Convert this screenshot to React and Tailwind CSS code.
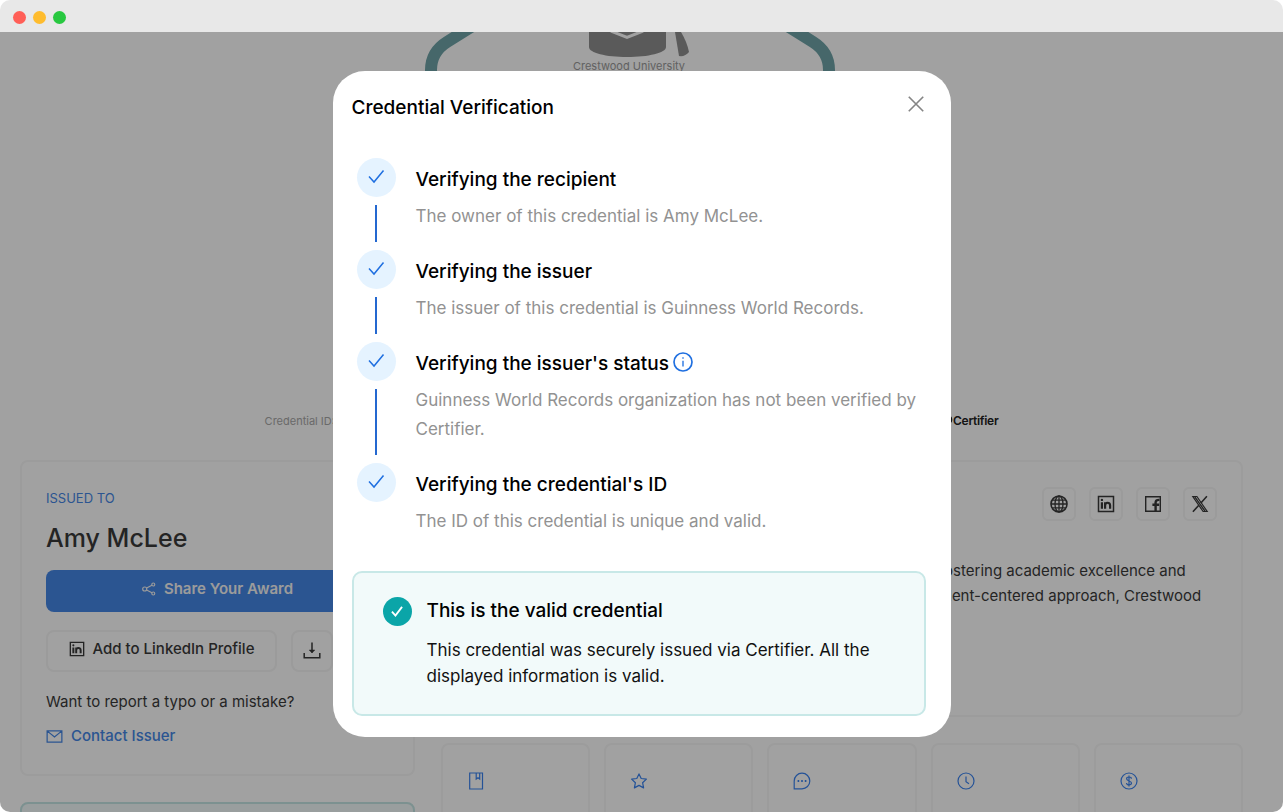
const steps = [
  { title: 'Verifying the recipient', text: 'The owner of this credential is Amy McLee.' },
  { title: 'Verifying the issuer', text: 'The issuer of this credential is Guinness World Records.' },
  {
    title: "Verifying the issuer's status",
    text: 'Guinness World Records organization has not been verified by Certifier.',
    info: true,
  },
  { title: "Verifying the credential's ID", text: 'The ID of this credential is unique and valid.' },
];

function Icon({ size = 18, stroke = 1.2, children, className = '' }) {
  return (
    <svg
      width={size}
      height={size}
      viewBox="0 0 18 18"
      fill="none"
      stroke="currentColor"
      strokeWidth={stroke}
      className={`shrink-0 ${className}`}
      aria-hidden="true"
    >
      {children}
    </svg>
  );
}

function ShareIcon() {
  return (
    <Icon size={14} stroke={1.5}>
      <circle cx="3.5" cy="9" r="2.6" />
      <circle cx="14.5" cy="3.2" r="1.9" />
      <circle cx="14.5" cy="14.8" r="1.9" />
      <path d="M5.9 7.8 12.8 4.1M5.9 10.2l6.9 3.7" />
    </Icon>
  );
}

function LinkedInIcon({ size = 16 }) {
  return (
    <Icon size={size} stroke={1.5}>
      <path d="M1.5 1.5h15v15h-15z" />
      <path d="M4.9 7.2v6.6M8.1 7.2v6.6M8.1 10.4c0-3.4 5-3.6 5 0v3.4" strokeWidth="2.2" />
      <circle cx="4.9" cy="4.9" r="1.2" fill="currentColor" stroke="none" />
    </Icon>
  );
}

function FacebookIcon() {
  return (
    <Icon size={18} stroke={1.4}>
      <path d="M1.7 1.7h14.6v14.6H1.7z" />
      <path d="M11.6 16V7.6c0-2 1-2.9 3.9-2.7M8.4 9.7h6.8" strokeWidth="2.4" />
    </Icon>
  );
}

function GlobeIcon() {
  return (
    <Icon size={18} stroke={1.3}>
      <circle cx="9" cy="9" r="8" strokeWidth="1.6" />
      <ellipse cx="9" cy="9" rx="4" ry="8" />
      <path d="M9 1v16M1 9h16M2.2 5.2h13.6M2.2 12.8h13.6" />
    </Icon>
  );
}

function XLogoIcon() {
  return (
    <Icon size={18} stroke={1.2}>
      <path d="M1.8 1.5h4.1l10.3 15h-4.1z" />
      <path d="M15.9 1.3 9.9 8M7.8 10.3l-5.9 6.4" strokeWidth="1.6" />
      <path d="M3.8 1.8 14 16.2" strokeWidth="1.4" />
    </Icon>
  );
}

function DownloadIcon() {
  return (
    <Icon size={18} stroke={1.5}>
      <path d="M9 .5v10M1.2 11v4.8h15.6V11" />
      <path d="M6.2 8h5.6L9 11z" fill="currentColor" strokeWidth="0.5" />
    </Icon>
  );
}

function MailIcon() {
  return (
    <Icon size={17} stroke={1.3}>
      <path d="M1.2 3h15.6v12H1.2zM1.8 3.6 9 9.6l7.2-6" />
    </Icon>
  );
}

const tiles = [
  <Icon key="book">
    <path d="M2.7 1h12.8v16H2.7zM9.2 1v6l1.8-1.3L12.7 7V1" />
  </Icon>,
  <Icon key="star">
    <path strokeLinejoin="round" d="m9 1.9 2.2 4.6 5.2.6-3.8 3.6 1 5.2L9 13.4l-4.6 2.5 1-5.2L1.6 7.1l5.2-.6z" />
  </Icon>,
  <Icon key="chat">
    <path d="M1.2 16.8V9A7.8 7.8 0 1 1 9 16.8z" />
    <path d="M4.6 9h1.6M8.2 9h1.6M11.8 9h1.6" strokeWidth="1.8" />
  </Icon>,
  <Icon key="clock">
    <circle cx="9" cy="9" r="8" />
    <path d="M9 4.5V9.8l3 2" />
  </Icon>,
  <Icon key="dollar">
    <circle cx="9" cy="9" r="8" />
    <path d="M11.4 6.8c0-2.4-4.8-2.4-4.8 0 0 2.6 4.9 1.7 4.9 4.3 0 2.5-5 2.5-5 0M9 3.6v10.8" />
  </Icon>,
];

function CertificatePreview() {
  return (
    <svg width="414" height="340" viewBox="0 0 414 340" className="mx-auto" aria-hidden="true">
      <path
        d="M46-5 22 10Q6 20 6 38V250Q6 270 22 280L180 335h50l158-55Q404 270 404 250V38Q404 20 388 10L364-5"
        fill="none"
        stroke="#6fa4a8"
        strokeWidth="12"
      />
      <path d="M164 0v15c0 6 17 10 38 10s39-4 39-10V0z" fill="#8f8f8f" />
      <path d="M186-1l16 6.5 16-6.5" fill="none" stroke="#fff" strokeWidth="3" />
      <path d="M250 0h6q6 10 8 20-4 5-10 4z" fill="#8f8f8f" />
      <text x="204" y="38" textAnchor="middle" fill="#9a9a9a" fontSize="11">
        Crestwood University
      </text>
    </svg>
  );
}

function CredentialPage() {
  return (
    <main className="pl-5 pr-10 text-[#3a3a3a]">
      <div className="flex h-[428px] flex-col justify-between">
        <CertificatePreview />
        <div className="mx-auto mb-[31px] flex w-[60%] items-center justify-between text-[11px] leading-4">
          <span className="text-[#a8a8a8]">Credential ID:</span>
          <span className="flex items-center text-xs font-semibold tracking-tight text-[#222]">
            <Icon size={12} stroke={2}>
              <circle cx="10" cy="7" r="6" />
              <path d="M6 12v5l4-2 4 2v-5" />
            </Icon>
            Certifier
          </span>
        </div>
      </div>

      <div className="grid grid-cols-[33fr_67fr] items-start gap-[26px]">
        <div className="space-y-[26px]">
          <section className="rounded-lg border-2 border-[#f7f7f7] px-6 pt-7 pb-[26px]">
            <p className="text-[13px] leading-4 text-[#4587e6]">ISSUED TO</p>
            <h1 className="mt-3.5 text-[25px] leading-9 font-medium">Amy McLee</h1>
            <button className="mt-3.5 flex h-[42px] w-full items-center justify-center gap-2 rounded-lg bg-[#4587e6] pb-1 text-[15px] font-semibold text-[#f5f5f5]">
              <ShareIcon />
              Share Your Award
            </button>
            <div className="mt-[18px] flex gap-3.5">
              <button className="flex h-[42px] flex-1 items-center justify-center gap-2 rounded-lg border-2 border-[#f5f5f5] pb-1 text-[15px] font-medium whitespace-nowrap">
                <LinkedInIcon />
                Add to LinkedIn Profile
              </button>
              <button aria-label="Download" className="flex size-[42px] items-center justify-center rounded-lg border-2 border-[#f5f5f5]">
                <DownloadIcon />
              </button>
              <button aria-label="Share" className="flex size-[42px] items-center justify-center rounded-lg border-2 border-[#f5f5f5]">
                <ShareIcon />
              </button>
            </div>
            <p className="mt-[18px] text-[15px] leading-6">Want to report a typo or a mistake?</p>
            <a href="#contact" className="mt-2.5 flex items-center gap-2 text-[15px] leading-6 font-medium text-[#4587e6]">
              <MailIcon />
              Contact Issuer
            </a>
          </section>
          <section className="h-40 rounded-lg border-2 border-[#c5e6e4] bg-[#f2fafa]" />
        </div>

        <div className="space-y-[26px]">
          <section className="h-[257px] rounded-lg border-2 border-[#f7f7f7] px-6 pt-[25px]">
            <div className="flex justify-end gap-[13px]">
              {[
                ['Website', <GlobeIcon key="i" />],
                ['LinkedIn', <LinkedInIcon key="i" size={18} />],
                ['Facebook', <FacebookIcon key="i" />],
                ['X', <XLogoIcon key="i" />],
              ].map(([label, icon]) => (
                <a
                  key={label}
                  href="#social"
                  aria-label={label}
                  className="flex size-[34px] items-center justify-center rounded-md border-2 border-[#f5f5f5]"
                >
                  {icon}
                </a>
              ))}
            </div>
            <p className="mt-[37px] ml-auto w-[296px] text-[15px] leading-[25px] whitespace-nowrap">
              to fostering academic excellence and
              <br />
              student-centered approach, Crestwood
            </p>
          </section>
          <div className="grid grid-cols-5 gap-3.5">
            {tiles.map((icon, i) => (
              <div key={i} className="h-40 rounded-lg border-2 border-[#f7f7f7] px-6 pt-[27px] text-[#3a83f0]">
                {icon}
              </div>
            ))}
          </div>
        </div>
      </div>
    </main>
  );
}

function Step({ title, text, info, last }) {
  return (
    <li className="flex gap-5">
      <div className="flex flex-col items-center">
        <span className="flex size-[39px] items-center justify-center rounded-full bg-[#e5f3ff] text-[#1f6fe0]">
          <Icon stroke={1.5}>
            <path d="m2 7.5 5 5.5L16.5 1.500" />
          </Icon>
        </span>
        {!last && <span className="my-2 w-0.5 flex-1 bg-[#2468d0]" />}
      </div>
      <div className={last ? 'flex-1 pt-2' : 'flex-1 pt-2 pb-[19px]'}>
        <h3 className="flex items-center gap-1 text-[19px] leading-7 font-medium">
          {title}
          {info && (
            <button aria-label="More about issuer status" className="-mt-1 text-[#1f6fe0]">
              <Icon size={20} stroke={1.5}>
                <circle cx="9" cy="9" r="8.1" />
                <path d="M9 7.8v5.2M9 4.8v1.3" strokeWidth="1.2" />
              </Icon>
            </button>
          )}
        </h3>
        <p className="mt-2 text-[17px] leading-[29px] text-[#929292]">{text}</p>
      </div>
    </li>
  );
}

function VerificationModal() {
  return (
    <div
      role="dialog"
      aria-labelledby="modal-title"
      className="w-[618px] max-w-full rounded-[32px] bg-white pt-[23px] pr-[25px] pb-[21px] pl-[19px] text-black"
    >
      <div className="flex items-start justify-between">
        <h2 id="modal-title" className="text-[19px] leading-7 font-medium">
          Credential Verification
        </h2>
        <button aria-label="Close" className="text-[#858585]">
          <Icon size={20} stroke={1.5}>
            <path d="m2.5 2.5 13 13M15.5 2.5l-13 13" />
          </Icon>
        </button>
      </div>

      <ol className="mt-9 pl-[5px]">
        {steps.map((step, i) => (
          <Step key={step.title} {...step} last={i === steps.length - 1} />
        ))}
      </ol>

      <div className="mt-[35px] flex gap-[15px] rounded-[10px] border-2 border-[#c8e8e7] bg-[#f2fafa] pt-6 pr-8 pb-[25px] pl-[29px]">
        <span className="flex size-[29px] shrink-0 items-center justify-center rounded-full bg-[#0ba5a8] text-white">
          <Icon size={14} stroke={2.4}>
            <path d="m2.5 8.5 4.5 5L15.5 2.5" />
          </Icon>
        </span>
        <div>
          <h3 className="text-[19px] leading-7 font-medium">This is the valid credential</h3>
          <p className="mt-3 text-[17px] leading-[26px] text-[#111]">
            This credential was securely issued via Certifier. All the displayed information is valid.
          </p>
        </div>
      </div>
    </div>
  );
}

export default function App() {
  return (
    <div className="flex h-screen flex-col overflow-hidden rounded-[10px] bg-white font-['Inter',sans-serif]">
      <header className="flex h-8 shrink-0 items-center gap-[7px] bg-[#e8e8e8] pt-0.5 pl-[13px]">
        <span className="size-[13px] rounded-full bg-[#ff5f57]" />
        <span className="size-[13px] rounded-full bg-[#febc2e]" />
        <span className="size-[13px] rounded-full bg-[#28c840]" />
      </header>

      <div className="relative min-h-0 flex-1 overflow-hidden">
        <CredentialPage />
        <div className="absolute inset-0 flex items-start justify-center bg-black/37 pt-[39px]">
          <VerificationModal />
        </div>
      </div>
    </div>
  );
}
